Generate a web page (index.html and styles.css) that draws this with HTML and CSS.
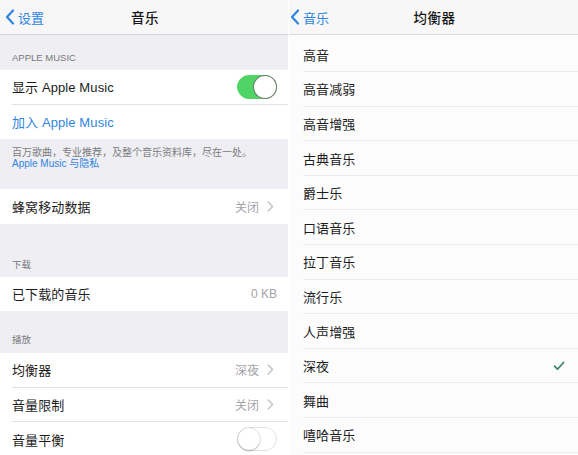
FILE: index.html
```html
<!DOCTYPE html>
<html lang="zh-CN">
<head>
<meta charset="utf-8">
<title>音乐 / 均衡器</title>
<link rel="stylesheet" href="styles.css">
</head>
<body>
<div class="screen">
  <section class="panel panel-left">
    <header class="nav">
      <a class="back"><svg class="chev" width="10" height="16" viewBox="0 0 10 16"><path d="M8 1.5 L2 8 L8 14.5" fill="none" stroke="currentColor" stroke-width="2.2" stroke-linecap="round" stroke-linejoin="round"/></svg><span>设置</span></a>
      <h1 class="title">音乐</h1>
    </header>
    <div class="content">
      <div class="group-header h-apple">APPLE MUSIC</div>
      <div class="group">
        <div class="row"><div class="row-body"><span class="label">显示 Apple Music</span><span class="toggle on"><span class="knob"></span></span></div></div>
        <div class="row"><div class="row-body last"><span class="label link">加入 Apple Music</span></div></div>
      </div>
      <div class="group-footer">百万歌曲，专业推荐，及整个音乐资料库，尽在一处。<br><span class="link">Apple Music 与隐私</span></div>
      <div class="group">
        <div class="row"><div class="row-body last"><span class="label">蜂窝移动数据</span><span class="detail">关闭<svg class="disc" width="7" height="11" viewBox="0 0 7 11"><path d="M1.2 1 L5.6 5.5 L1.2 10" fill="none" stroke="currentColor" stroke-width="1.5" stroke-linecap="round" stroke-linejoin="round"/></svg></span></div></div>
      </div>
      <div class="group-header h-download">下载</div>
      <div class="group">
        <div class="row"><div class="row-body last"><span class="label">已下载的音乐</span><span class="detail plain">0 KB</span></div></div>
      </div>
      <div class="group-header h-play">播放</div>
      <div class="group">
        <div class="row"><div class="row-body"><span class="label">均衡器</span><span class="detail">深夜<svg class="disc" width="7" height="11" viewBox="0 0 7 11"><path d="M1.2 1 L5.6 5.5 L1.2 10" fill="none" stroke="currentColor" stroke-width="1.5" stroke-linecap="round" stroke-linejoin="round"/></svg></span></div></div>
        <div class="row"><div class="row-body"><span class="label">音量限制</span><span class="detail">关闭<svg class="disc" width="7" height="11" viewBox="0 0 7 11"><path d="M1.2 1 L5.6 5.5 L1.2 10" fill="none" stroke="currentColor" stroke-width="1.5" stroke-linecap="round" stroke-linejoin="round"/></svg></span></div></div>
        <div class="row"><div class="row-body last"><span class="label">音量平衡</span><span class="toggle"><span class="knob"></span></span></div></div>
      </div>
    </div>
  </section>
  <section class="panel panel-right">
    <header class="nav">
      <a class="back"><svg class="chev" width="10" height="16" viewBox="0 0 10 16"><path d="M8 1.5 L2 8 L8 14.5" fill="none" stroke="currentColor" stroke-width="2.2" stroke-linecap="round" stroke-linejoin="round"/></svg><span>音乐</span></a>
      <h1 class="title">均衡器</h1>
    </header>
    <div class="content list">
      <div class="row eq"><div class="row-body"><span class="label">高音</span></div></div>
      <div class="row eq"><div class="row-body"><span class="label">高音减弱</span></div></div>
      <div class="row eq"><div class="row-body"><span class="label">高音增强</span></div></div>
      <div class="row eq"><div class="row-body"><span class="label">古典音乐</span></div></div>
      <div class="row eq"><div class="row-body"><span class="label">爵士乐</span></div></div>
      <div class="row eq"><div class="row-body"><span class="label">口语音乐</span></div></div>
      <div class="row eq"><div class="row-body"><span class="label">拉丁音乐</span></div></div>
      <div class="row eq"><div class="row-body"><span class="label">流行乐</span></div></div>
      <div class="row eq"><div class="row-body"><span class="label">人声增强</span></div></div>
      <div class="row eq"><div class="row-body"><span class="label">深夜</span><svg class="check" width="12" height="10" viewBox="0 0 12 10"><path d="M1.5 5.2 L4.5 8.2 L10.5 1.5" fill="none" stroke="currentColor" stroke-width="1.7" stroke-linecap="round" stroke-linejoin="round"/></svg></div></div>
      <div class="row eq"><div class="row-body"><span class="label">舞曲</span></div></div>
      <div class="row eq"><div class="row-body"><span class="label">嘻哈音乐</span></div></div>
    </div>
  </section>
</div>
</body>
</html>
```

FILE: styles.css
```css
* { box-sizing: border-box; margin: 0; padding: 0; }
html, body { width: 578px; height: 455px; overflow: hidden; }
body {
  background: #ffffff;
  font-family: "Liberation Sans", "Noto Sans CJK SC", sans-serif;
  color: #1f1f1f;
  -webkit-font-smoothing: antialiased;
}
.screen {
  display: flex;
  width: 578px;
  height: 455px;
  gap: 1px;
  background: #ffffff;
}
.panel {
  display: flex;
  flex-direction: column;
  height: 455px;
  overflow: hidden;
}
.panel-left { width: 288px; background: #efeff3; }
.panel-right { width: 289px; background: #fcfcfd; }

.nav {
  height: 35px;
  flex: none;
  display: flex;
  align-items: center;
  justify-content: center;
  background: #f7f7f8;
  border-bottom: 1px solid #d9d9dc;
  position: relative;
}
.title {
  font-family: "Noto Sans CJK SC", sans-serif;
  font-size: 13.5px;
  font-weight: 500;
  color: #151515;
  letter-spacing: 0.5px;
}
.panel-left .title { margin-left: 2px; }
.panel-right .title { margin-left: 2px; }
.back {
  position: absolute;
  left: 5px;
  top: 0;
  height: 34px;
  display: flex;
  align-items: center;
  gap: 3px;
  color: #2f84e0;
  font-family: "Noto Sans CJK SC", sans-serif;
  font-size: 13px;
}
.panel-right .back { left: 1px; }
.chev { display: block; }

.content { display: flex; flex-direction: column; }
.group-header {
  font-family: "Liberation Sans", "Noto Sans CJK SC", sans-serif;
  font-size: 9.5px;
  color: #77777c;
  padding-left: 12px;
  line-height: 12px;
  padding-bottom: 6px;
}
.h-apple { padding-top: 17px; }
.h-download { padding-top: 35px; }
.h-play { padding-top: 23px; padding-bottom: 7px; }

.group { background: #ffffff; display: flex; flex-direction: column; }
.row { padding-left: 12px; background: #ffffff; }
.row-body {
  height: 34.5px;
  display: flex;
  align-items: center;
  justify-content: space-between;
  padding-right: 11px;
  border-bottom: 1px solid #e2e2e6;
}
.row-body.last { border-bottom: none; }
.label {
  font-size: 13px;
  color: #1c1c1c;
  letter-spacing: 0.1px;
}
.link { color: #2f84e0; }
.detail {
  display: flex;
  align-items: center;
  gap: 8px;
  font-size: 12px;
  color: #a3a3a8;
  margin-right: 3px;
}
.detail.plain { margin-right: 0; }
.detail .disc { color: #c5c5ca; }

.group-footer {
  font-size: 10px;
  line-height: 11px;
  color: #7b7b80;
  padding: 8px 12px 20px 12px;
}

.toggle {
  width: 40px;
  height: 24px;
  border-radius: 12px;
  background: #ffffff;
  border: 1.5px solid #e3e3e6;
  display: flex;
  align-items: center;
  justify-content: flex-start;
}
.toggle .knob {
  width: 22px;
  height: 22px;
  border-radius: 50%;
  background: #ffffff;
  box-shadow: 0 1px 2px rgba(0,0,0,0.25), 0 0 0 0.5px rgba(0,0,0,0.12);
}
.toggle.on {
  background: #4fd465;
  border-color: #4fd465;
  justify-content: flex-end;
}
.toggle.on .knob {
  box-shadow: 0 0 0 1px #6b7a6e;
}

.list { padding-top: 2.5px; background: #fcfcfd; }
.row.eq { padding-left: 14px; background: #fcfcfd; }
.row.eq .row-body { height: 34.6px; border-bottom-color: #ebebee; padding-right: 13px; }
.check { color: #3b7f70; display: block; }
```
